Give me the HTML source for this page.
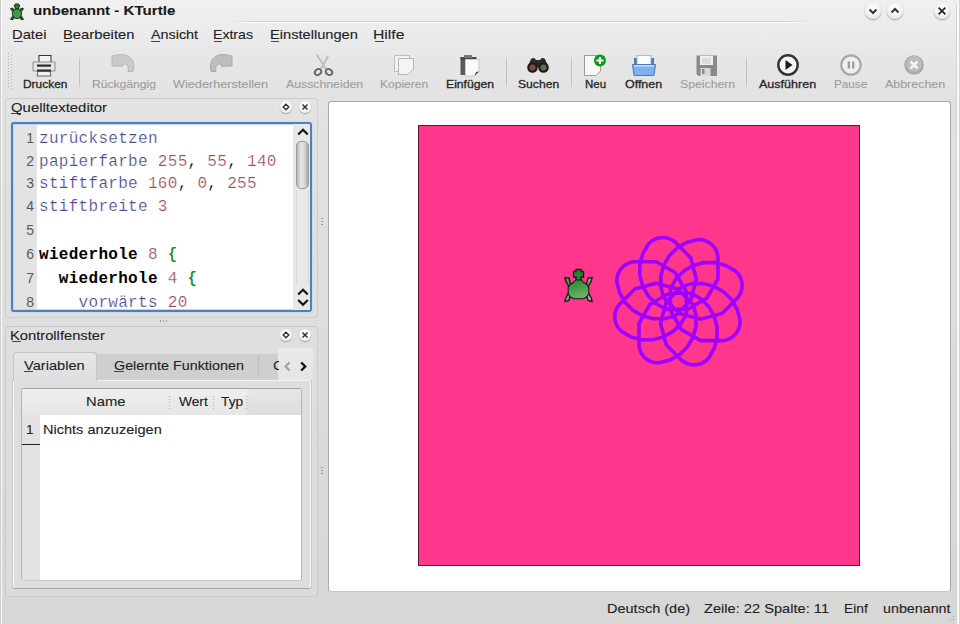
<!DOCTYPE html>
<html><head><meta charset="utf-8">
<style>
*{margin:0;padding:0;box-sizing:border-box}
html,body{width:960px;height:624px;overflow:hidden}
body{position:relative;font-family:"Liberation Sans",sans-serif;
 background:linear-gradient(to bottom,#f0f0f0 0px,#ededed 22px,#e6e6e6 60px,#e2e2e2 100px,#dedede 300px,#d9d9d8 500px,#d7d7d5 624px)}
.a{position:absolute}
.t{position:absolute;white-space:pre;transform-origin:0 0;line-height:normal;-webkit-text-stroke:0.1px currentColor}
.cl{position:absolute;left:39px;white-space:pre;font:16px "Liberation Mono",monospace;letter-spacing:0.3px;color:#000;line-height:normal;-webkit-text-stroke:0.22px #fff}
.ln{position:absolute;left:20px;width:14px;text-align:right;font:14px "Liberation Sans",sans-serif;color:#5a5a5a;line-height:normal}
.kw{color:#46469a}
.num{color:#a04a5a}
.bold{font-weight:bold;color:#000;-webkit-text-stroke:0}
.br{font-weight:bold;color:#1a8a1a}
.ul{position:absolute;height:1px;background:#444}
.sep{position:absolute;width:1px;background:linear-gradient(to bottom,rgba(0,0,0,0),rgba(0,0,0,0.16) 20%,rgba(0,0,0,0.16) 80%,rgba(0,0,0,0))}
.wbtn{position:absolute;width:16px;height:16px;border-radius:50%;
 background:radial-gradient(circle at 50% 40%,#ffffff 0,#f7f7f7 45%,#e4e4e4 75%,#c9c9c9 100%);box-shadow:0 1px 1.5px rgba(0,0,0,0.35)}
.dbtn{position:absolute;width:12px;height:12px;border-radius:50%;
 background:radial-gradient(circle at 50% 40%,#ffffff 0,#f6f6f6 50%,#e0e0e0 100%);box-shadow:0 1px 1px rgba(0,0,0,0.3)}
</style></head><body>

<!-- window borders -->
<div class="a" style="left:0;top:0;width:1px;height:624px;background:#cdcdcd"></div>
<div class="a" style="left:1px;top:0;width:3px;height:624px;border-left:1px solid #fbfbfb;border-top-left-radius:4px"></div>
<div class="a" style="left:952px;top:0;width:5px;height:624px;border-right:1px solid #d2d2d2;border-top-right-radius:5px"></div>
<div class="a" style="left:957px;top:2px;width:2px;height:622px;background:#fafafa"></div>
<div class="a" style="left:959px;top:0;width:1px;height:624px;background:#d4d4d4"></div>

<!-- title separator -->
<div class="a" style="left:230px;top:21px;width:585px;height:1px;background:linear-gradient(to right,rgba(0,0,0,0),rgba(0,0,0,0.12) 4%,rgba(0,0,0,0.12) 94%,rgba(0,0,0,0))"></div>
<div class="a" style="left:230px;top:22px;width:585px;height:1px;background:linear-gradient(to right,rgba(255,255,255,0),rgba(255,255,255,0.9) 4%,rgba(255,255,255,0.9) 94%,rgba(255,255,255,0))"></div>

<!-- title turtle icon -->
<svg class="a" style="left:8px;top:3px" width="18" height="18" viewBox="0 0 32 37">
 <g stroke="#1a2a1a" stroke-width="2">
  <path d="M3 11 H8 L10 14 L7 17 L5 16 Z" fill="#2a7a30"/>
  <path d="M29 11 H24 L22 14 L25 17 L27 16 Z" fill="#2a7a30"/>
  <path d="M3 34 H8 L10 31 L7 28 L5 29 Z" fill="#2a7a30"/>
  <path d="M29 34 H24 L22 31 L25 28 L27 29 Z" fill="#2a7a30"/>
  <path d="M12.5 2 H19.5 V4 H21 V8 H19.5 V12 H12.5 V8 H11 V4 H12.5 Z" fill="#1f8a2a"/>
  <ellipse cx="16" cy="22" rx="9.5" ry="10" fill="#3a9c46"/>
 </g>
</svg>
<!-- window buttons -->
<div class="wbtn" style="left:865px;top:3px"></div>
<div class="wbtn" style="left:887px;top:3px"></div>
<div class="wbtn" style="left:934px;top:3px"></div>
<svg class="a" style="left:865px;top:3px" width="16" height="16"><path d="M4.5 6.5 L8 10 L11.5 6.5" fill="none" stroke="#333" stroke-width="2"/></svg>
<svg class="a" style="left:887px;top:3px" width="16" height="16"><path d="M4.5 9.5 L8 6 L11.5 9.5" fill="none" stroke="#333" stroke-width="2"/></svg>
<svg class="a" style="left:934px;top:3px" width="16" height="16"><path d="M4.6 4.6 L11.4 11.4 M11.4 4.6 L4.6 11.4" fill="none" stroke="#2a2a2a" stroke-width="1.8"/></svg>

<!-- menu underlines -->
<div class="ul" style="left:13.5px;top:40.5px;width:9px"></div>
<div class="ul" style="left:64px;top:40.5px;width:8px"></div>
<div class="ul" style="left:150.5px;top:40.5px;width:9px"></div>
<div class="ul" style="left:214px;top:40.5px;width:8px"></div>
<div class="ul" style="left:271px;top:40.5px;width:8px"></div>
<div class="ul" style="left:374.5px;top:40.5px;width:9px"></div>

<!-- toolbar handle -->
<div class="a" style="left:7px;top:52px;width:3px;height:36px;background:radial-gradient(circle,rgba(0,0,0,0.22) 0.7px,transparent 1px) 0 0/3px 3px"></div>
<div class="a" style="left:10px;top:53.5px;width:3px;height:36px;background:radial-gradient(circle,rgba(0,0,0,0.22) 0.7px,transparent 1px) 0 0/3px 3px"></div>
<!-- toolbar separators -->
<div class="sep" style="left:79px;top:54px;height:36px"></div>
<div class="sep" style="left:506px;top:54px;height:36px"></div>
<div class="sep" style="left:571px;top:54px;height:36px"></div>
<div class="sep" style="left:746px;top:54px;height:36px"></div>

<!-- ICONS placeholder -->
<!-- printer -->
<svg class="a" style="left:30px;top:52px" width="28" height="26" viewBox="0 0 28 26">
 <rect x="9" y="3.5" width="12" height="9" fill="#f2f2f2" stroke="#333" stroke-width="1"/>
 <path d="M3 10 H25 V19 H3 Z" fill="#e6e6e6" stroke="#777" stroke-width="0.8"/>
 <rect x="7" y="12.5" width="14" height="2.2" fill="#2a2a2a"/>
 <rect x="7" y="17.5" width="14" height="2.2" fill="#2a2a2a"/>
 <path d="M8 19.5 H20 L21 24 H7 Z" fill="#f0f0f0" stroke="#444" stroke-width="0.8"/>
</svg>
<!-- undo (grey) -->
<svg class="a" style="left:110px;top:53px" width="26" height="20" viewBox="0 0 26 20">
 <path d="M2 3 L10 1.5 C18 1 24 6 24 13 L23 18.5 L18 18.5 C19 13 17 10.5 12.5 11 L13 13.2 L2 13 Z" fill="#cacaca" stroke="#b4b4b4" stroke-width="0.9" stroke-linejoin="round"/>
</svg>
<!-- redo (grey) -->
<svg class="a" style="left:208px;top:53px" width="26" height="20" viewBox="0 0 26 20">
 <path d="M24 3 L16 1.5 C8 1 2.5 6 2.5 13 L3 18.5 L8 18.5 C7 13 9 10.5 13.5 11 L13 13.2 L24 13 Z" fill="#bebebe" stroke="#a6a6a6" stroke-width="0.9" stroke-linejoin="round"/>
</svg>
<!-- scissors -->
<svg class="a" style="left:312px;top:53px" width="24" height="24" viewBox="0 0 24 24">
 <path d="M5 2 L14 16 M16 3 L9 16" stroke="#bdbdbd" stroke-width="2" fill="none"/>
 <ellipse cx="6" cy="19" rx="3.5" ry="2.8" transform="rotate(-35 6 19)" fill="none" stroke="#666" stroke-width="2"/>
 <ellipse cx="17" cy="19" rx="3.5" ry="2.8" transform="rotate(35 17 19)" fill="none" stroke="#666" stroke-width="2"/>
</svg>
<!-- copy -->
<svg class="a" style="left:393px;top:54px" width="24" height="22" viewBox="0 0 24 22">
 <path d="M1.5 1.5 H16.5 V17.5 H1.5 Z" fill="#f2f2f2" stroke="#bcbcbc" stroke-width="1"/>
 <path d="M5.5 4.5 H20.5 V15 L15 20.5 H5.5 Z" fill="#f4f4f4" stroke="#b4b4b4" stroke-width="1"/>
</svg>
<!-- paste -->
<svg class="a" style="left:459px;top:54px" width="24" height="24" viewBox="0 0 24 24">
 <rect x="1.5" y="3" width="5" height="18" fill="#5a5a5a"/>
 <rect x="1.5" y="3" width="16" height="3" fill="#4a4a4a"/>
 <rect x="5" y="1" width="8" height="3" fill="#777"/>
 <path d="M6.5 5.5 H20 V17.5 L15.5 22 H6.5 Z" fill="#fafafa" stroke="#c8c8c8" stroke-width="1"/>
 <path d="M15.5 22 L20 17.5 L17 18 Z" fill="#444"/>
</svg>
<!-- binoculars -->
<svg class="a" style="left:526px;top:57px" width="24" height="17" viewBox="0 0 24 17">
 <path d="M5 2 C7 0 9 1 10 3 L14 3 C15 1 17 0 19 2 L22 9 L12 10 L2 9 Z" fill="#2a2a2a"/>
 <circle cx="6.5" cy="10.5" r="5.3" fill="#1e1e1e"/>
 <circle cx="17.5" cy="10.5" r="5.3" fill="#1e1e1e"/>
 <circle cx="6.5" cy="10.5" r="3" fill="#8a4a30"/>
 <circle cx="17.5" cy="10.5" r="3" fill="#6a6a4a"/>
</svg>
<!-- new -->
<svg class="a" style="left:583px;top:53px" width="26" height="24" viewBox="0 0 26 24">
 <path d="M1.5 2.5 H17.5 V18 L13 22.5 H1.5 Z" fill="#f8f8f8" stroke="#9a9a9a" stroke-width="1"/>
 <circle cx="17" cy="7.5" r="6" fill="#0c9a18"/>
 <path d="M17 4 V11 M13.5 7.5 H20.5" stroke="#fff" stroke-width="2.2"/>
</svg>
<!-- open -->
<svg class="a" style="left:631px;top:54px" width="26" height="23" viewBox="0 0 26 23">
 <path d="M3 4 H23 V10 H3 Z" fill="#4f7ab0"/>
 <rect x="6" y="1.5" width="14" height="9" fill="#fbfbfb" stroke="#aaa" stroke-width="0.8"/>
 <path d="M1.5 10.5 H24.5 L23 21.5 H3 Z" fill="#7fb0f0" stroke="#4a78b8" stroke-width="1"/>
 <rect x="3" y="11" width="20" height="1.5" fill="#c8e0ff"/>
</svg>
<!-- save (grey) -->
<svg class="a" style="left:696px;top:55px" width="22" height="22" viewBox="0 0 22 22">
 <path d="M0.5 0.5 H21 V21 H2.5 L0.5 19 Z" fill="#8a8a8a"/>
 <rect x="4" y="1" width="13" height="9" fill="#f0f0f0"/>
 <path d="M6 4 H15 M6 6 H15 M6 8 H15" stroke="#c0c0c0" stroke-width="0.8"/>
 <rect x="4.5" y="13" width="10" height="8" fill="#d8d8d8"/>
 <rect x="6" y="14" width="2.5" height="5" fill="#8a8a8a"/>
</svg>
<!-- play -->
<svg class="a" style="left:776px;top:53px" width="24" height="24" viewBox="0 0 24 24">
 <circle cx="12" cy="12" r="9.7" fill="#f4f4f4" stroke="#333" stroke-width="2.4"/>
 <path d="M9.5 7 L16.5 12 L9.5 17 Z" fill="#1a1a1a"/>
</svg>
<!-- pause (grey) -->
<svg class="a" style="left:839px;top:53px" width="24" height="24" viewBox="0 0 24 24">
 <circle cx="12" cy="12" r="9.7" fill="#efefef" stroke="#a8a8a8" stroke-width="2.2"/>
 <path d="M9.8 8.5 V15.5 M14.2 8.5 V15.5" stroke="#9a9a9a" stroke-width="2.2"/>
</svg>
<!-- cancel (grey) -->
<svg class="a" style="left:902px;top:53px" width="24" height="24" viewBox="0 0 24 24">
 <circle cx="12" cy="12" r="9.8" fill="#a9a9a9"/>
 <circle cx="12" cy="11" r="8" fill="#bcbcbc"/>
 <path d="M8.5 8.5 L15.5 15.5 M15.5 8.5 L8.5 15.5" stroke="#f4f4f4" stroke-width="2.6"/>
</svg>


<!-- dock 1 -->
<div class="a" style="left:5px;top:98px;width:313px;height:220px;border:1px solid rgba(0,0,0,0.08);border-radius:4px;background:linear-gradient(#e3e3e3,#dfdfdf)"></div>
<div class="ul" style="left:11px;top:113px;width:10px"></div>
<div class="dbtn" style="left:280px;top:101px"></div>
<div class="dbtn" style="left:299px;top:101px"></div>
<svg class="a" style="left:280px;top:101px" width="12" height="12"><path d="M6 3.2 L8.8 6 L6 8.8 L3.2 6 Z" fill="none" stroke="#333" stroke-width="1.4"/></svg>
<svg class="a" style="left:299px;top:101px" width="12" height="12"><path d="M3.5 3.5 L8.5 8.5 M8.5 3.5 L3.5 8.5" fill="none" stroke="#333" stroke-width="1.5"/></svg>

<!-- editor -->
<div class="a" style="left:11px;top:122px;width:301px;height:190px;border:2px solid #4f7fbe;border-radius:3px;background:#fff;overflow:hidden;box-shadow:inset 0 0 0 1px rgba(170,205,240,0.8),0 0 1px 1px rgba(170,210,240,0.35)">
  <div class="a" style="left:1px;top:1px;width:23px;height:184px;background:#e3e3e3"></div>
  <div class="a" style="left:280px;top:0;width:17px;height:186px;background:#e8e8e8"></div>
</div>
<div class="cl" style="top:129.60px"><span class="kw">zurücksetzen</span></div>
<div class="ln" style="top:129.60px">1</div>
<div class="cl" style="top:152.50px"><span class="kw">papierfarbe</span> <span class="num">255</span>, <span class="num">55</span>, <span class="num">140</span></div>
<div class="ln" style="top:152.50px">2</div>
<div class="cl" style="top:175.40px"><span class="kw">stiftfarbe</span> <span class="num">160</span>, <span class="num">0</span>, <span class="num">255</span></div>
<div class="ln" style="top:175.40px">3</div>
<div class="cl" style="top:198.30px"><span class="kw">stiftbreite</span> <span class="num">3</span></div>
<div class="ln" style="top:198.30px">4</div>
<div class="cl" style="top:221.80px"></div>
<div class="ln" style="top:221.80px">5</div>
<div class="cl" style="top:245.50px"><span class="bold">wiederhole</span> <span class="num">8</span> <span class="br">{</span></div>
<div class="ln" style="top:245.50px">6</div>
<div class="cl" style="top:269.50px">  <span class="bold">wiederhole</span> <span class="num">4</span> <span class="br">{</span></div>
<div class="ln" style="top:269.50px">7</div>
<div class="cl" style="top:294.00px">    <span class="kw">vorwärts</span> <span class="num">20</span></div>
<div class="ln" style="top:294.00px">8</div>
<!-- editor scrollbar -->
<div class="a" style="left:296px;top:141px;width:13px;height:48px;border-radius:5px;border:1px solid #9c9c9c;background:linear-gradient(to right,#b4b4b4,#e6e6e6 35%,#dadada 65%,#a8a8a8)"></div>
<div class="a" style="left:296px;top:190px;width:1px;height:95px;background:rgba(0,0,0,0.06)"></div>
<div class="a" style="left:308px;top:190px;width:1px;height:95px;background:rgba(0,0,0,0.06)"></div>
<svg class="a" style="left:295px;top:124px" width="16" height="186">
 <path d="M3.2 10.5 L8 5.7 L12.8 10.5" fill="none" stroke="#111" stroke-width="2.2"/>
 <path d="M3.2 170.5 L8 165.7 L12.8 170.5" fill="none" stroke="#111" stroke-width="2.2"/>
 <path d="M3.2 176 L8 180.8 L12.8 176" fill="none" stroke="#111" stroke-width="2.2"/>
</svg>

<!-- splitter dots -->
<div class="a" style="left:321px;top:217px;width:2px;height:9px;background:radial-gradient(circle,rgba(0,0,0,0.3) 0.6px,transparent 1px) 0 0/2px 3px"></div>
<div class="a" style="left:321px;top:466px;width:2px;height:9px;background:radial-gradient(circle,rgba(0,0,0,0.3) 0.6px,transparent 1px) 0 0/2px 3px"></div>
<div class="a" style="left:159px;top:320px;width:8px;height:2px;background:radial-gradient(circle,rgba(0,0,0,0.3) 0.6px,transparent 1px) 0 0/3px 2px"></div>

<!-- dock 2 -->
<div class="a" style="left:5px;top:326px;width:313px;height:271px;border:1px solid rgba(0,0,0,0.08);border-radius:4px;background:linear-gradient(#dfdfdf,#dbdbdb)"></div>
<div class="ul" style="left:11.5px;top:341px;width:9px"></div>
<div class="dbtn" style="left:280px;top:329px"></div>
<div class="dbtn" style="left:299px;top:329px"></div>
<svg class="a" style="left:280px;top:329px" width="12" height="12"><path d="M6 3.2 L8.8 6 L6 8.8 L3.2 6 Z" fill="none" stroke="#333" stroke-width="1.4"/></svg>
<svg class="a" style="left:299px;top:329px" width="12" height="12"><path d="M3.5 3.5 L8.5 8.5 M8.5 3.5 L3.5 8.5" fill="none" stroke="#333" stroke-width="1.5"/></svg>

<!-- tab pane -->
<div class="a" style="left:12px;top:379px;width:300px;height:210px;border:1px solid #c9c9c9;border-bottom-color:#a6a6a6;border-radius:3px;background:#dedede;box-shadow:inset 1px 0 #fbfbfb,inset -1px 0 #fbfbfb,inset 0 1px #f2f2f2"></div>
<!-- unselected tabs -->
<div class="a" style="left:96px;top:354px;width:182px;height:26px;background:#cfcfcf"></div>
<div class="a" style="left:258px;top:356px;width:1px;height:22px;background:#bdbdbd"></div>
<div class="a" style="left:277.5px;top:348px;width:35px;height:32px;background:linear-gradient(#e9e9e9,#e5e5e5)"></div>
<svg class="a" style="left:278px;top:356px" width="34" height="20">
 <path d="M11.5 6.5 L7.5 10.5 L11.5 14.5" fill="none" stroke="#a0a0a0" stroke-width="2.1"/>
 <path d="M23.2 6.5 L27.2 10.5 L23.2 14.5" fill="none" stroke="#111" stroke-width="2.3"/>
</svg>
<!-- selected tab -->
<div class="a" style="left:13px;top:352px;width:84px;height:29px;border:1px solid #c4c4c4;border-bottom:none;border-radius:4px 4px 0 0;background:linear-gradient(#e6e6e6,#dedede)"></div>
<div class="ul" style="left:24px;top:371px;width:9px"></div>
<div class="ul" style="left:113.5px;top:371px;width:10px"></div>

<!-- table -->
<div class="a" style="left:21px;top:388px;width:281px;height:193px;border:1px solid #b4b4b4;border-top-color:#a4a4a4;border-bottom-color:#c8c8c8;border-radius:3px;background:#fff;overflow:hidden">
 <div class="a" style="left:0;top:0;width:279px;height:26px;background:linear-gradient(#e6e6e6,#dedede)"></div>
 <div class="a" style="left:0;top:0;width:225px;height:26px;background:linear-gradient(#eeeeee,#e6e6e6)"></div>
 <div class="a" style="left:0;top:26px;width:18px;height:166px;background:#e2e2e2"></div>
</div>
<div class="a" style="left:22px;top:444px;width:18px;height:1px;background:#222"></div>
<div class="a" style="left:169px;top:396px;width:1px;height:14px;background:repeating-linear-gradient(to bottom,#b0b0b0 0 1px,transparent 1px 3px)"></div>
<div class="a" style="left:213px;top:396px;width:1px;height:14px;background:repeating-linear-gradient(to bottom,#b0b0b0 0 1px,transparent 1px 3px)"></div>
<div class="a" style="left:246px;top:396px;width:1px;height:14px;background:repeating-linear-gradient(to bottom,#b0b0b0 0 1px,transparent 1px 3px)"></div>

<!-- canvas view -->
<div class="a" style="left:328px;top:101px;width:623px;height:491px;border:1px solid #a8a8a8;border-bottom-color:#c8c8c8;border-radius:3px;background:#fff"></div>
<div class="a" style="left:418px;top:125px;width:442px;height:441px;background:#ff378c;border:1px solid #5a1838"></div>
<svg class="a" style="left:0;top:0" width="960" height="624">
 <path d="M639.00,345.50 L639.00,323.40 L650.05,304.26 L669.19,293.21 L691.29,293.21 L700.86,298.74 L708.67,306.55 L714.20,316.12 L717.06,326.79 L717.06,337.84 L714.20,348.52 L708.67,358.09 L706.33,360.43 L703.61,362.33 L700.61,363.73 L697.41,364.59 L694.10,364.88 L690.80,364.59 L687.60,363.73 L684.60,362.33 L681.88,360.43 L666.25,344.80 L660.53,323.46 L666.25,302.11 L681.88,286.48 L692.55,283.62 L703.60,283.62 L714.28,286.48 L723.85,292.01 L731.66,299.82 L737.18,309.39 L740.04,320.06 L740.04,323.38 L739.47,326.64 L738.34,329.76 L736.68,332.63 L734.55,335.17 L732.01,337.30 L729.14,338.96 L726.02,340.09 L722.76,340.67 L700.66,340.67 L681.52,329.62 L670.47,310.48 L670.47,288.38 L675.99,278.81 L683.81,270.99 L693.38,265.47 L704.05,262.61 L715.10,262.61 L725.77,265.47 L735.34,270.99 L737.69,273.34 L739.59,276.05 L740.99,279.06 L741.85,282.26 L742.14,285.56 L741.85,288.86 L740.99,292.07 L739.59,295.07 L737.69,297.79 L722.06,313.41 L700.71,319.13 L679.37,313.41 L663.74,297.79 L660.88,287.11 L660.88,276.06 L663.74,265.39 L669.26,255.82 L677.08,248.01 L686.65,242.48 L697.32,239.62 L700.63,239.62 L703.90,240.20 L707.01,241.33 L709.89,242.99 L712.42,245.12 L714.56,247.66 L716.21,250.53 L717.35,253.64 L717.92,256.91 L717.92,279.01 L706.87,298.15 L687.73,309.20 L665.63,309.20 L656.06,303.67 L648.25,295.86 L642.73,286.29 L639.87,275.62 L639.87,264.57 L642.73,253.89 L648.25,244.32 L650.59,241.98 L653.31,240.08 L656.31,238.68 L659.52,237.82 L662.82,237.53 L666.12,237.82 L669.32,238.68 L672.33,240.08 L675.04,241.98 L690.67,257.61 L696.39,278.95 L690.67,300.30 L675.04,315.93 L664.37,318.79 L653.32,318.79 L642.65,315.93 L633.08,310.40 L625.26,302.59 L619.74,293.02 L616.88,282.35 L616.88,279.03 L617.45,275.77 L618.59,272.65 L620.25,269.78 L622.38,267.24 L624.92,265.11 L627.79,263.45 L630.90,262.32 L634.17,261.74 L656.27,261.74 L675.41,272.79 L686.46,291.93 L686.46,314.03 L680.93,323.60 L673.12,331.42 L663.55,336.94 L652.87,339.80 L641.82,339.80 L631.15,336.94 L621.58,331.42 L619.24,329.07 L617.33,326.36 L615.93,323.35 L615.08,320.15 L614.79,316.85 L615.08,313.54 L615.93,310.34 L617.33,307.34 L619.24,304.62 L634.86,289.00 L656.21,283.28 L677.56,289.00 L693.18,304.62 L696.04,315.30 L696.04,326.35 L693.18,337.02 L687.66,346.59 L679.85,354.40 L670.28,359.93 L659.60,362.79 L656.29,362.79 L653.02,362.21 L649.91,361.08 L647.04,359.42 L644.50,357.29 L642.37,354.75 L640.71,351.88 L639.58,348.76 L639.00,345.50" fill="none" stroke="#a000ff" stroke-width="3.6" stroke-linejoin="round" stroke-linecap="round"/>
</svg>
<!-- turtle -->
<svg class="a" style="left:563px;top:267px" width="32" height="37" viewBox="0 0 32 37">
 <defs><linearGradient id="tg" x1="0" y1="0" x2="0.3" y2="1"><stop offset="0" stop-color="#1f8a28"/><stop offset="1" stop-color="#6cb068"/></linearGradient></defs>
 <g stroke="#1a1a1a" stroke-width="1.4" stroke-linejoin="miter">
  <path d="M8 19 L6 11 L2 10.5 L2.5 13.5 L5.5 19 Z" fill="#4a9a50"/>
  <path d="M23 19 L25 11 L29 10.5 L28.5 13.5 L25.5 19 Z" fill="#7aaa80"/>
  <path d="M8 26 L6 33.5 L2 34.5 L2.5 31.5 L5.5 26 Z" fill="#7aaa80"/>
  <path d="M23 26 L25 33.5 L29 34.5 L28.5 31.5 L25.5 26 Z" fill="#9ab8a0"/>
  <path d="M13 2.5 H18 V4.5 H20.5 V10 H18 V14 H13 V10 H10.5 V4.5 H13 Z" fill="#1f8a28"/>
  <path d="M12.5 13 H18.5 L20.5 15.5 L24 17.5 L25.8 20.5 V27 L23.5 30 L20.5 31.8 H10.5 L7.5 30 L5.2 27 V20.5 L7 17.5 L10.5 15.5 Z" fill="url(#tg)" stroke-width="1.1"/>
 </g>
</svg>


<!-- size grip -->
<div class="a" style="left:946px;top:612px;width:10px;height:10px;background:radial-gradient(circle,rgba(0,0,0,0.25) 0.7px,transparent 1px) 0 0/3px 3px;clip-path:polygon(100% 0,100% 100%,0 100%)"></div>

<div class="t" style="left:33.30px;top:3.60px;font:bold 12px 'Liberation Sans', sans-serif;color:#1a1a1a;transform:scaleX(1.2581);">unbenannt - KTurtle</div>
<div class="t" style="left:12.47px;top:27.30px;font:13px 'Liberation Sans', sans-serif;color:#222;transform:scaleX(1.1337);">Datei</div>
<div class="t" style="left:62.76px;top:27.30px;font:13px 'Liberation Sans', sans-serif;color:#222;transform:scaleX(1.1354);">Bearbeiten</div>
<div class="t" style="left:150.50px;top:27.30px;font:13px 'Liberation Sans', sans-serif;color:#222;transform:scaleX(1.1042);">Ansicht</div>
<div class="t" style="left:213.12px;top:27.30px;font:13px 'Liberation Sans', sans-serif;color:#222;transform:scaleX(1.0842);">Extras</div>
<div class="t" style="left:269.87px;top:27.30px;font:13px 'Liberation Sans', sans-serif;color:#222;transform:scaleX(1.1259);">Einstellungen</div>
<div class="t" style="left:373.39px;top:27.30px;font:13px 'Liberation Sans', sans-serif;color:#222;transform:scaleX(1.2108);">Hilfe</div>
<div class="t" style="left:22.60px;top:77.50px;font:11px 'Liberation Sans', sans-serif;color:#262626;transform:scaleX(1.0847);-webkit-text-stroke:0.3px currentColor;">Drucken</div>
<div class="t" style="left:91.75px;top:77.50px;font:11px 'Liberation Sans', sans-serif;color:#9c9c9c;transform:scaleX(1.0996);">Rückgängig</div>
<div class="t" style="left:173.00px;top:77.50px;font:11px 'Liberation Sans', sans-serif;color:#9c9c9c;transform:scaleX(1.1526);">Wiederherstellen</div>
<div class="t" style="left:285.50px;top:77.50px;font:11px 'Liberation Sans', sans-serif;color:#9c9c9c;transform:scaleX(1.1162);">Ausschneiden</div>
<div class="t" style="left:380.00px;top:77.50px;font:11px 'Liberation Sans', sans-serif;color:#9c9c9c;transform:scaleX(1.0930);">Kopieren</div>
<div class="t" style="left:446.00px;top:77.50px;font:11px 'Liberation Sans', sans-serif;color:#262626;transform:scaleX(1.1084);-webkit-text-stroke:0.3px currentColor;">Einfügen</div>
<div class="t" style="left:518.00px;top:77.50px;font:11px 'Liberation Sans', sans-serif;color:#262626;transform:scaleX(1.1024);-webkit-text-stroke:0.3px currentColor;">Suchen</div>
<div class="t" style="left:585.00px;top:77.50px;font:11px 'Liberation Sans', sans-serif;color:#262626;transform:scaleX(1.0468);-webkit-text-stroke:0.3px currentColor;">Neu</div>
<div class="t" style="left:625.00px;top:77.50px;font:11px 'Liberation Sans', sans-serif;color:#262626;transform:scaleX(1.1313);-webkit-text-stroke:0.3px currentColor;">Offnen</div>
<div class="t" style="left:679.50px;top:77.50px;font:11px 'Liberation Sans', sans-serif;color:#9c9c9c;transform:scaleX(1.1130);">Speichern</div>
<div class="t" style="left:759.00px;top:77.50px;font:11px 'Liberation Sans', sans-serif;color:#262626;transform:scaleX(1.1394);-webkit-text-stroke:0.3px currentColor;">Ausführen</div>
<div class="t" style="left:834.00px;top:77.50px;font:11px 'Liberation Sans', sans-serif;color:#9c9c9c;transform:scaleX(1.0620);">Pause</div>
<div class="t" style="left:884.50px;top:77.50px;font:11px 'Liberation Sans', sans-serif;color:#9c9c9c;transform:scaleX(1.1302);">Abbrechen</div>
<div class="t" style="left:11.25px;top:99.60px;font:13px 'Liberation Sans', sans-serif;color:#222;transform:scaleX(1.1463);">Quelltexteditor</div>
<div class="t" style="left:10.37px;top:327.80px;font:13px 'Liberation Sans', sans-serif;color:#222;transform:scaleX(1.1318);">Kontrollfenster</div>
<div class="t" style="left:24.00px;top:358.00px;font:13px 'Liberation Sans', sans-serif;color:#222;transform:scaleX(1.1241);">Variablen</div>
<div class="t" style="left:113.60px;top:358.00px;font:13px 'Liberation Sans', sans-serif;color:#222;transform:scaleX(1.1024);">Gelernte Funktionen</div>
<div class="t" style="left:273.00px;top:358.00px;font:13px 'Liberation Sans', sans-serif;color:#222;transform:scaleX(1.1111);clip-path:inset(0 4px 0 0);">C</div>
<div class="t" style="left:85.86px;top:393.80px;font:13px 'Liberation Sans', sans-serif;color:#222;transform:scaleX(1.1361);">Name</div>
<div class="t" style="left:178.50px;top:393.80px;font:13px 'Liberation Sans', sans-serif;color:#222;transform:scaleX(1.0546);">Wert</div>
<div class="t" style="left:221.00px;top:393.80px;font:13px 'Liberation Sans', sans-serif;color:#222;transform:scaleX(1.0568);">Typ</div>
<div class="t" style="left:26.00px;top:422.00px;font:13px 'Liberation Sans', sans-serif;color:#222;transform:scaleX(1.0429);">1</div>
<div class="t" style="left:43.08px;top:422.00px;font:13px 'Liberation Sans', sans-serif;color:#222;transform:scaleX(1.1181);">Nichts anzuzeigen</div>
<div class="t" style="left:607.28px;top:600.90px;font:13px 'Liberation Sans', sans-serif;color:#222;transform:scaleX(1.1164);">Deutsch (de)</div>
<div class="t" style="left:704.00px;top:600.90px;font:13px 'Liberation Sans', sans-serif;color:#222;transform:scaleX(1.1261);">Zeile: 22 Spalte: 11</div>
<div class="t" style="left:843.64px;top:600.90px;font:13px 'Liberation Sans', sans-serif;color:#222;transform:scaleX(1.0602);">Einf</div>
<div class="t" style="left:882.80px;top:600.90px;font:13px 'Liberation Sans', sans-serif;color:#222;transform:scaleX(1.0980);">unbenannt</div>
</body></html>
